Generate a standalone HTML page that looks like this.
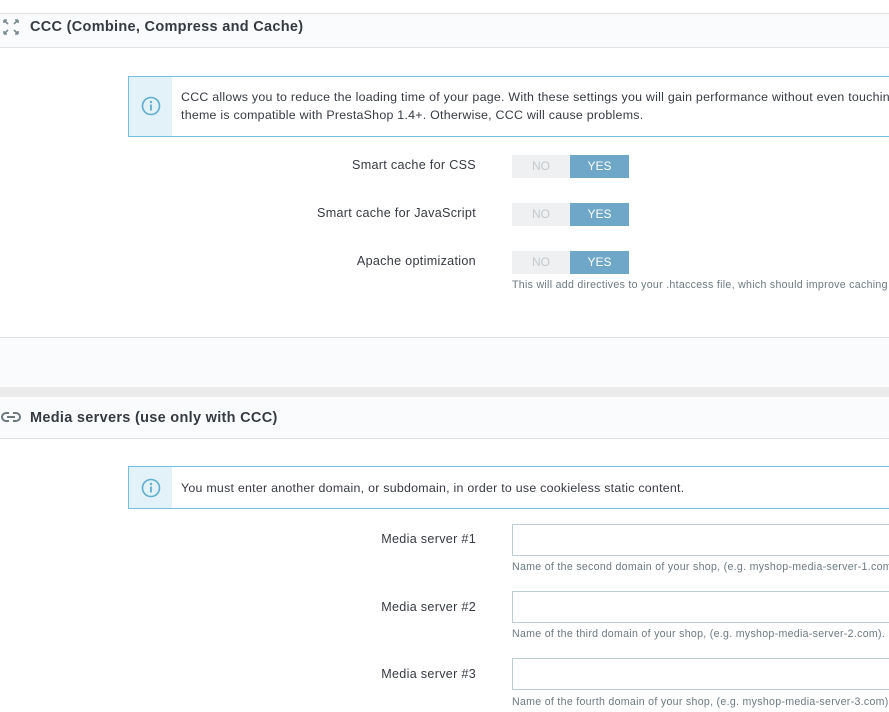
<!DOCTYPE html><html><head><style>
*{margin:0;padding:0;box-sizing:border-box}
html,body{width:889px;height:712px;overflow:hidden}
body{background:#fff;font-family:"Liberation Sans",sans-serif;color:#363a41}
#w{position:relative;width:889px;height:712px;overflow:hidden}
.a{position:absolute}
.hdr{left:0;width:889px;background:#fafbfc;border-top:1px solid #e0e2e4;border-bottom:1px solid #e0e2e4}
.ht{font-size:14.5px;font-weight:600;letter-spacing:.3px}
.alert{left:128px;width:761px;border:1px solid #72c1de;border-right:none;background:#fff;overflow:hidden}
.alert .ic{position:absolute;left:0;top:0;bottom:0;width:43px;background:#e3f2f8}
.at{font-size:12.4px;line-height:18px;color:#363a41;letter-spacing:.25px}
.lbl{font-size:12.6px;text-align:right;width:300px;left:176px;letter-spacing:.3px}
.tg{left:512px;width:117px;height:23px;font-size:12px}
.tg .n{position:absolute;left:0;top:0;width:58px;height:23px;background:#eef0f2;color:#c4c8cb;text-align:center;line-height:23px}
.tg .y{position:absolute;left:58px;top:0;width:59px;height:23px;background:#6ea7c7;color:#fff;text-align:center;line-height:23px}
.help{font-size:10.6px;color:#6c7a80;left:512px;white-space:nowrap;letter-spacing:.3px}
.inp{left:512px;width:377px;height:32px;border:1px solid #bbcdd2;border-right:none;background:#fff}
</style></head><body><div id="w">
<div class="a hdr" style="top:13px;height:35px"></div>
<svg class="a" style="left:2px;top:18px" width="18" height="18" viewBox="0 0 18 18" fill="none" stroke="#7a8b91" stroke-width="1.6"><path d="M2 2l4 4M2 2h3M2 2v3M16 2l-4 4M16 2h-3M16 2v3M2 16l4-4M2 16h3M2 16v-3M16 16l-4-4M16 16h-3M16 16v-3"/></svg>
<div class="a ht" style="left:30px;top:19px">CCC (Combine, Compress and Cache)</div>
<div class="a alert" style="top:76px;height:61px"><div class="ic"></div>
<svg class="a" style="left:12px;top:19px" width="20" height="20" viewBox="0 0 20 20"><circle cx="10" cy="10" r="8.5" fill="none" stroke="#5fadd0" stroke-width="1.6"/><circle cx="10" cy="6" r="1.2" fill="#5fadd0"/><rect x="9.1" y="8.5" width="1.8" height="6" fill="#5fadd0"/></svg>
<div class="a at" style="left:52px;top:11px;white-space:nowrap">CCC allows you to reduce the loading time of your page. With these settings you will gain performance without even touching<br>theme is compatible with PrestaShop 1.4+. Otherwise, CCC will cause problems.</div></div>
<div class="a lbl" style="top:158px">Smart cache for CSS</div>
<div class="a tg" style="top:155px"><span class="n">NO</span><span class="y">YES</span></div>
<div class="a lbl" style="top:206px">Smart cache for JavaScript</div>
<div class="a tg" style="top:203px"><span class="n">NO</span><span class="y">YES</span></div>
<div class="a lbl" style="top:254px">Apache optimization</div>
<div class="a tg" style="top:251px"><span class="n">NO</span><span class="y">YES</span></div>
<div class="a help" style="top:279px">This will add directives to your .htaccess file, which should improve caching and compression.</div>
<div class="a" style="left:0;top:337px;width:889px;height:50px;background:#fafbfc;border-top:1px solid #e0e2e4"></div>
<div class="a" style="left:0;top:387px;width:889px;height:10px;background:#ebebeb"></div>
<div class="a hdr" style="top:397px;height:42px;border-top:none"></div>
<svg class="a" style="left:1px;top:410px" width="20" height="14" viewBox="0 0 20 14" fill="none" stroke="#6c7a80" stroke-width="2"><path d="M8 3H5a4 4 0 0 0 0 8h3M12 3h3a4 4 0 0 1 0 8h-3M6 7h8"/></svg>
<div class="a ht" style="left:30px;top:410px">Media servers (use only with CCC)</div>
<div class="a alert" style="top:466px;height:43px"><div class="ic"></div>
<svg class="a" style="left:12px;top:11px" width="20" height="20" viewBox="0 0 20 20"><circle cx="10" cy="10" r="8.5" fill="none" stroke="#5fadd0" stroke-width="1.6"/><circle cx="10" cy="6" r="1.2" fill="#5fadd0"/><rect x="9.1" y="8.5" width="1.8" height="6" fill="#5fadd0"/></svg>
<div class="a at" style="left:52px;top:12px;white-space:nowrap">You must enter another domain, or subdomain, in order to use cookieless static content.</div></div>
<div class="a lbl" style="top:532px">Media server #1</div>
<div class="a inp" style="top:524px"></div>
<div class="a help" style="top:561px">Name of the second domain of your shop, (e.g. myshop-media-server-1.com).</div>
<div class="a lbl" style="top:600px">Media server #2</div>
<div class="a inp" style="top:591px"></div>
<div class="a help" style="top:628px">Name of the third domain of your shop, (e.g. myshop-media-server-2.com).</div>
<div class="a lbl" style="top:667px">Media server #3</div>
<div class="a inp" style="top:658px"></div>
<div class="a help" style="top:696px">Name of the fourth domain of your shop, (e.g. myshop-media-server-3.com).</div>
</div></body></html>
